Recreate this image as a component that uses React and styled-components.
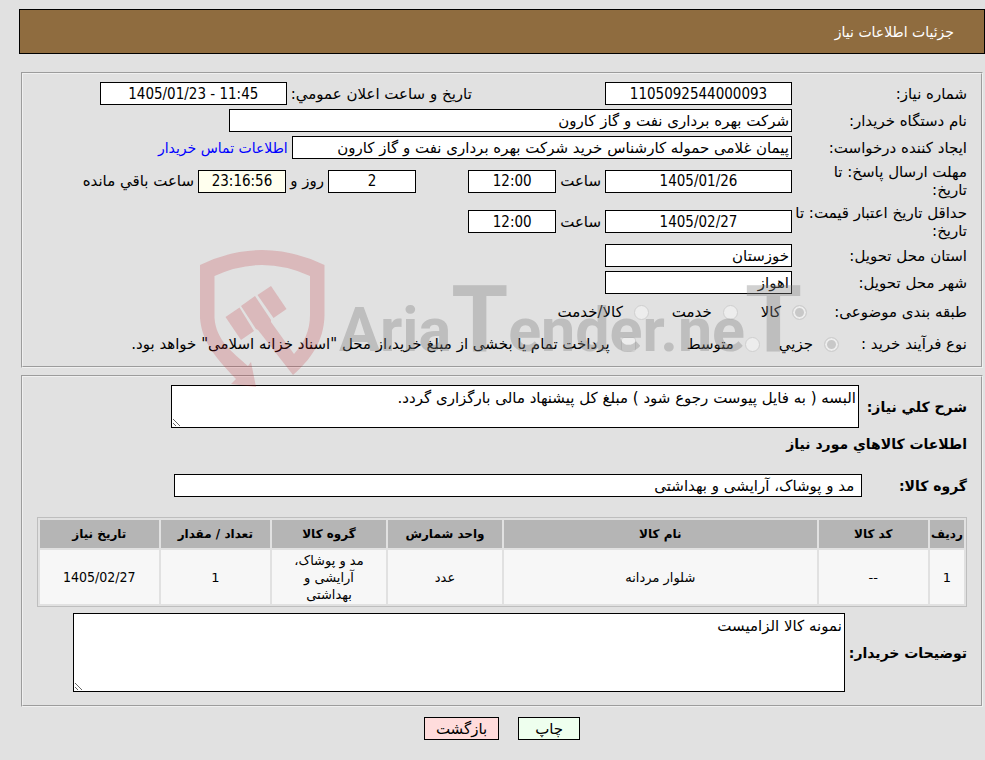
import { createGlobalStyle, styled } from "styled-components";

const GlobalStyle = createGlobalStyle`
  * {
    box-sizing: border-box;
  }

  body {
    margin: 0;
    background: #e1e1e1;
    color: #000000;
    font-family: "DejaVu Sans", sans-serif;
    font-size: 15px;
    line-height: 18px;
  }

  input,
  textarea,
  button {
    font: inherit;
    color: inherit;
  }
`;

const StyledPage = styled.main`
  position: relative;
  padding: 9px 0 20px 19px;
`;

const StyledHeader = styled.header`
  display: flex;
  align-items: center;
  height: 45px;
  padding: 0 30px;
  border: 1px solid #000000;
  background: #8f6c3f;
`;

const StyledTitle = styled.h1`
  margin: 0;
  font-size: 14px;
  font-weight: 400;
  color: #ffffff;
`;

const StyledPanel = styled.section`
  display: flex;
  flex-direction: column;
  gap: 4px;
  margin: ${({ $first }) => ($first ? "18px" : "7px")} 2px 0;
  padding: 8px 14px ${({ $first }) => ($first ? "8px" : "13px")};
  border: 2px groove #f0f0f0;
`;

const StyledRow = styled.div`
  display: flex;
  align-items: center;
  gap: 4px;
  min-height: ${({ $height }) => $height || 23}px;
`;

const StyledLabel = styled.label`
  flex: none;
  width: ${({ $width }) => ($width ? `${$width}px` : "auto")};
  white-space: nowrap;
`;

const StyledBoldLabel = styled(StyledLabel)`
  font-size: 14px;
  font-weight: 700;
`;

const StyledHeading = styled.h2`
  margin: 0;
  font-size: 14px;
  font-weight: 700;
`;

const StyledCell = styled.div`
  display: flex;
  flex: none;
  align-items: center;
  gap: 4px;
  width: ${({ $width }) => $width};
`;

const StyledInput = styled.input`
  width: ${({ $width }) => $width};
  height: 23px;
  padding: 0 2px;
  border: 1px solid #000000;
  background: #ffffff;
`;

const StyledNumberInput = styled(StyledInput)`
  background: ${({ $background }) => $background || "#ffffff"};
  font-family: "DejaVu Sans Condensed", "DejaVu Sans", sans-serif;
  text-align: center;
`;

const StyledTextarea = styled.textarea`
  width: ${({ $width }) => $width};
  height: ${({ $height }) => $height}px;
  padding: 3px 2px;
  border: 1px solid #000000;
  background: #ffffff;
`;

const StyledLink = styled.a`
  color: #0000ff;
  font-size: 14px;
  text-decoration: none;
`;

const StyledOption = styled.label`
  display: flex;
  align-items: center;
  gap: 11px;
  margin-left: ${({ $space }) => $space || 0}px;
`;

const StyledCheck = styled.input`
  appearance: none;
  width: 15px;
  height: 15px;
  margin: 0;
  border: 1px solid #cfcfcf;
  border-radius: ${({ type }) => (type === "radio" ? "50%" : "3px")};
  background: #ededed;

  &:checked {
    background: #c8c8c8;
    box-shadow: inset 0 0 0 2px #ededed;
  }
`;

const StyledTable = styled.table`
  width: 100%;
  margin: 1px 0 2px;
  table-layout: fixed;
  border: 1px solid #bebebe;
  border-spacing: 2px;
  font-size: 13px;
  text-align: center;

  th {
    height: 28px;
    padding: 0;
    background: #b5b5b5;
    font-size: 12px;
    white-space: nowrap;
  }

  td {
    height: 54px;
    padding: 0 16px;
    background: #f7f7f7;
    line-height: 17px;
  }

  td:first-child {
    padding: 0;
  }

  td:last-child {
    font-family: "DejaVu Sans Condensed", "DejaVu Sans", sans-serif;
    font-size: 14px;
  }
`;

const StyledActions = styled.div`
  display: flex;
  justify-content: center;
  gap: 19px;
  margin-top: 10px;
`;

const StyledButton = styled.button`
  height: 23px;
  padding: 0 ${({ $padding }) => $padding}px;
  border: 1px solid #000000;
  background: ${({ $background }) => $background};
`;

const StyledWatermark = styled.svg`
  position: absolute;
  left: 195px;
  top: 240px;
  width: 620px;
  height: 150px;
  pointer-events: none;
`;

const columns = [
  { title: "ردیف", width: "34px", value: "1" },
  { title: "کد کالا", width: "12%", value: "--" },
  { title: "نام کالا", value: "شلوار مردانه" },
  { title: "واحد شمارش", width: "12.5%", value: "عدد" },
  { title: "گروه کالا", width: "12.5%", value: "مد و پوشاک، آرایشی و بهداشتی" },
  { title: "تعداد / مقدار", width: "12%", value: "1" },
  { title: "تاریخ نیاز", width: "13%", value: "1405/02/27" },
];

const Watermark = () => (
  <StyledWatermark viewBox="195 240 620 150" direction="ltr" aria-hidden="true">
    <g fill="#c01822" fillOpacity="0.2">
      <path d="M200 265Q262 235 324.5 265V315C324 342 310 360 293 375L258 330L256 329L241 306L255 296L271 320V322L294 354C304 343 310 331 310 315V276Q262 254 214.5 276V318C216 340 232 352 248 366L251 362L256 387L231 384L236 379C212 354 202 340 200 318Z" />
      <path d="M225.5 317L239.5 307.5L254 331L241 340Z" />
      <path d="M257.5 295L271 286L286.5 309L273.5 318Z" />
    </g>
    <text
      x="339"
      y="351"
      fill="#808080"
      fillOpacity="0.36"
      fontFamily="Roboto, Liberation Sans, sans-serif"
      fontWeight="700"
      fontSize="61"
    >
      Aria<tspan fontSize="92">T</tspan>ender.ne<tspan fontSize="92">T</tspan>
    </text>
  </StyledWatermark>
);

const NeedInfo = () => (
  <StyledPanel $first>
    <StyledRow>
      <StyledLabel htmlFor="number" $width={171}>شماره نیاز:</StyledLabel>
      <StyledCell $width="34%">
        <StyledNumberInput id="number" $width="187px" readOnly value="1105092544000093" />
      </StyledCell>
      <StyledLabel htmlFor="announced">تاریخ و ساعت اعلان عمومي:</StyledLabel>
      <StyledNumberInput id="announced" $width="187px" dir="ltr" readOnly value="1405/01/23 - 11:45" />
    </StyledRow>
    <StyledRow>
      <StyledLabel htmlFor="buyer" $width={171}>نام دستگاه خریدار:</StyledLabel>
      <StyledInput id="buyer" $width="60.5%" readOnly value="شرکت بهره برداری نفت و گاز کارون" />
    </StyledRow>
    <StyledRow>
      <StyledLabel htmlFor="creator" $width={171}>ایجاد کننده درخواست:</StyledLabel>
      <StyledInput
        id="creator"
        $width="53.8%"
        readOnly
        value="پیمان غلامی حموله کارشناس خرید شرکت بهره برداری نفت و گاز کارون"
      />
      <StyledLink href="#contact">اطلاعات تماس خریدار</StyledLink>
    </StyledRow>
    <StyledRow $height={36}>
      <StyledLabel htmlFor="deadline" $width={171}>
        مهلت ارسال پاسخ: تا
        <br />
        تاریخ:
      </StyledLabel>
      <StyledCell $width="40%">
        <StyledNumberInput id="deadline" $width="187px" readOnly value="1405/01/26" />
        <StyledLabel htmlFor="deadlineHour">ساعت</StyledLabel>
        <StyledNumberInput id="deadlineHour" $width="88px" readOnly value="12:00" />
      </StyledCell>
      <StyledNumberInput id="days" $width="88px" readOnly value="2" />
      <StyledLabel htmlFor="days" $width={34}>روز و</StyledLabel>
      <StyledNumberInput id="left" $width="88px" $background="#ffffee" readOnly value="23:16:56" />
      <StyledLabel htmlFor="left">ساعت باقي مانده</StyledLabel>
    </StyledRow>
    <StyledRow $height={37}>
      <StyledLabel htmlFor="validity" $width={171}>
        حداقل تاریخ اعتبار قیمت: تا
        <br />
        تاریخ:
      </StyledLabel>
      <StyledNumberInput id="validity" $width="187px" readOnly value="1405/02/27" />
      <StyledLabel htmlFor="validityHour">ساعت</StyledLabel>
      <StyledNumberInput id="validityHour" $width="88px" readOnly value="12:00" />
    </StyledRow>
    <StyledRow>
      <StyledLabel htmlFor="province" $width={171}>استان محل تحویل:</StyledLabel>
      <StyledInput id="province" $width="187px" readOnly value="خوزستان" />
    </StyledRow>
    <StyledRow>
      <StyledLabel htmlFor="city" $width={171}>شهر محل تحویل:</StyledLabel>
      <StyledInput id="city" $width="187px" readOnly value="اهواز" />
    </StyledRow>
    <StyledRow $height={28}>
      <StyledLabel as="span" $width={156}>طبقه بندی موضوعی:</StyledLabel>
      <StyledOption $space={19}>
        <StyledCheck type="radio" name="category" disabled defaultChecked />
        کالا
      </StyledOption>
      <StyledOption $space={19}>
        <StyledCheck type="radio" name="category" disabled />
        خدمت
      </StyledOption>
      <StyledOption>
        <StyledCheck type="radio" name="category" disabled />
        کالا/خدمت
      </StyledOption>
    </StyledRow>
    <StyledRow $height={28}>
      <StyledLabel as="span" $width={124}>نوع فرآیند خرید :</StyledLabel>
      <StyledOption $space={15}>
        <StyledCheck type="radio" name="process" disabled defaultChecked />
        جزیي
      </StyledOption>
      <StyledOption $space={47}>
        <StyledCheck type="radio" name="process" disabled />
        متوسط
      </StyledOption>
      <StyledOption>
        <StyledCheck type="checkbox" disabled />
        پرداخت تمام یا بخشی از مبلغ خرید،از محل "اسناد خزانه اسلامی" خواهد بود.
      </StyledOption>
    </StyledRow>
  </StyledPanel>
);

const GoodsInfo = () => (
  <StyledPanel>
    <StyledRow>
      <StyledBoldLabel htmlFor="summary" $width={104}>شرح کلي نیاز:</StyledBoldLabel>
      <StyledTextarea
        id="summary"
        $width="74%"
        $height={43}
        readOnly
        value="البسه ( به فایل پیوست رجوع شود ) مبلغ کل پیشنهاد مالی بارگزاری گردد."
      />
    </StyledRow>
    <StyledRow>
      <StyledHeading>اطلاعات کالاهاي مورد نیاز</StyledHeading>
    </StyledRow>
    <StyledRow $height={53}>
      <StyledBoldLabel htmlFor="group" $width={101}>گروه کالا:</StyledBoldLabel>
      <StyledInput id="group" $width="74%" readOnly value=" مد و پوشاک، آرایشی و بهداشتی" />
    </StyledRow>
    <StyledTable>
      <colgroup>
        {columns.map(({ title, width }) => (
          <col key={title} width={width} />
        ))}
      </colgroup>
      <thead>
        <tr>
          {columns.map(({ title }) => (
            <th key={title}>{title}</th>
          ))}
        </tr>
      </thead>
      <tbody>
        <tr>
          {columns.map(({ title, value }) => (
            <td key={title}>{value}</td>
          ))}
        </tr>
      </tbody>
    </StyledTable>
    <StyledRow>
      <StyledBoldLabel htmlFor="notes">توضیحات خریدار:</StyledBoldLabel>
      <StyledTextarea id="notes" $width="83%" $height={79} readOnly value="نمونه کالا الزامیست" />
    </StyledRow>
  </StyledPanel>
);

const App = () => (
  <StyledPage dir="rtl" lang="fa">
    <GlobalStyle />
    <StyledHeader>
      <StyledTitle>جزئیات اطلاعات نیاز</StyledTitle>
    </StyledHeader>
    <NeedInfo />
    <GoodsInfo />
    <StyledActions>
      <StyledButton type="button" $padding={16} $background="#eeffee">چاپ</StyledButton>
      <StyledButton type="button" $padding={11} $background="#ffdcdc">بازگشت</StyledButton>
    </StyledActions>
    <Watermark />
  </StyledPage>
);

export default App;
